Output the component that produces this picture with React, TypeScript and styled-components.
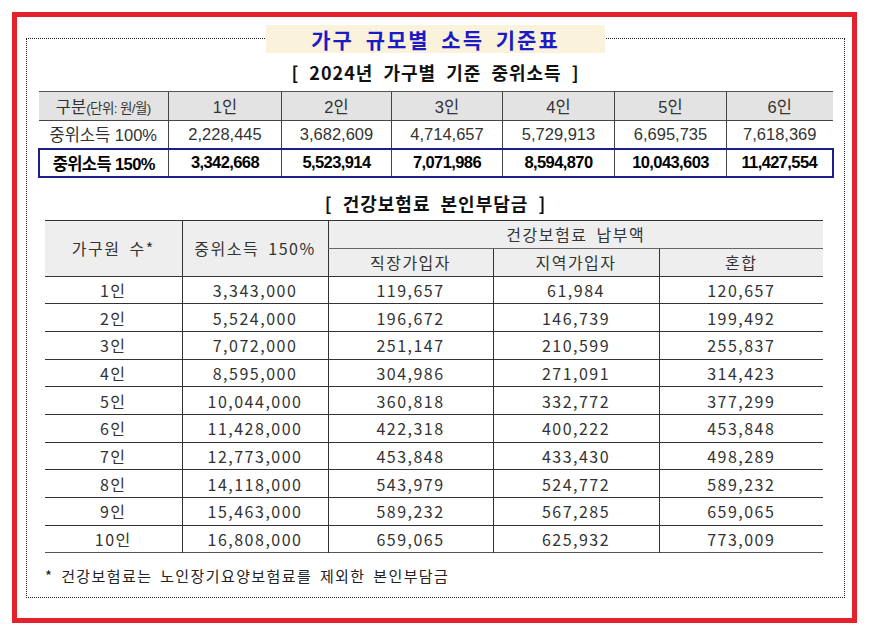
import React from 'react';
import styled, { createGlobalStyle } from 'styled-components';

const GlobalStyle = createGlobalStyle`
  body {
    margin: 0;
    background: #fff;
    font-family: "Noto Sans CJK KR", "Noto Sans", sans-serif;
  }
`;

// red outer frame
const Frame = styled.div`
  box-sizing: border-box;
  margin: 12px 0 0 12px;
  width: 845px;
  height: 611px;
  border: 5px solid #e5222b;
  padding: 21px 7px 0 9px;
`;

// dotted inner box
const Board = styled.div`
  box-sizing: border-box;
  width: 819px;
  height: 560px;
  border: 1px dotted #222;
  display: flex;
  flex-direction: column;
  align-items: center;
`;

const Title = styled.div`
  margin-top: -14px;
  width: 339px;
  height: 28px;
  background: #fbf2db;
  color: #1c1cc4;
  font-size: 21px;
  font-weight: 700;
  letter-spacing: 2px;
  word-spacing: 5px;
  line-height: 28px;
  text-align: center;
`;

const SubTitle = styled.div<{ $top: number; $h: number }>`
  margin-top: ${p => p.$top}px;
  height: ${p => p.$h}px;
  line-height: ${p => p.$h}px;
  font-size: 18px;
  font-weight: 700;
  color: #111;
  letter-spacing: 1px;
  word-spacing: 5px;
  text-align: center;
`;

const IncomeTable = styled.table`
  border-collapse: collapse;
  table-layout: fixed;
  width: 794px;
  font-family: "Liberation Sans", "Noto Sans CJK KR", sans-serif;
  font-size: 16.5px;
  color: #333;
`;

const IncomeHead = styled.th`
  height: 28px;
  padding: 0;
  background: #e3e3e3;
  font-weight: 400;
  border-top: 1px solid #555;
  border-bottom: 1px solid #444;
  & + & {
    border-left: 1px solid #444;
  }
`;

const Unit = styled.span`
  font-size: 13.5px;
  letter-spacing: -0.6px;
`;

const IncomeRow = styled.tr<{ $strong?: boolean }>`
  height: 28px;
  border: ${p => (p.$strong ? '2px solid #1d1d8c' : 'none')};
  color: ${p => (p.$strong ? '#000' : '#333')};
  font-weight: ${p => (p.$strong ? 700 : 400)};
  letter-spacing: ${p => (p.$strong ? '-0.6px' : '0')};
`;

const IncomeCell = styled.td`
  padding: 0;
  text-align: center;
  & + & {
    border-left: 1px solid #444;
  }
`;

const FeeTable = styled.table`
  align-self: flex-start;
  margin-left: 18px;
  border-collapse: collapse;
  table-layout: fixed;
  width: 778px;
  font-size: 16px;
  color: #333;
  letter-spacing: 1.5px;
  word-spacing: 4px;
  border-top: 1px solid #333;
`;

const FeeHead = styled.th<{ $edge?: boolean; $split?: boolean }>`
  height: 27px;
  padding: 0;
  background: #eeeeee;
  font-weight: 400;
  border-left: ${p => (p.$edge ? 'none' : '1px solid #333')};
  border-bottom: 1px solid ${p => (p.$split ? '#666' : '#333')};
`;

const FeeRow = styled.tr`
  height: 27.7px;
  border-bottom: 1px solid #333;
  &:last-child {
    border-bottom-color: #555;
  }
`;

const FeeCell = styled.td`
  padding: 0;
  text-align: center;
  & + & {
    border-left: 1px solid #333;
  }
`;

const Note = styled.div`
  align-self: flex-start;
  margin: 13px 0 0 18px;
  font-size: 15px;
  line-height: 20px;
  color: #222;
  letter-spacing: 1.4px;
  word-spacing: 3px;
`;

const incomeCols = [130, 113, 110, 111, 112, 112, 106];
const feeCols = [137, 146, 165, 166, 164];

const base = ['2,228,445', '3,682,609', '4,714,657', '5,729,913', '6,695,735', '7,618,369'];
const high = ['3,342,668', '5,523,914', '7,071,986', '8,594,870', '10,043,603', '11,427,554'];

const fees = [
  ['1인', '3,343,000', '119,657', '61,984', '120,657'],
  ['2인', '5,524,000', '196,672', '146,739', '199,492'],
  ['3인', '7,072,000', '251,147', '210,599', '255,837'],
  ['4인', '8,595,000', '304,986', '271,091', '314,423'],
  ['5인', '10,044,000', '360,818', '332,772', '377,299'],
  ['6인', '11,428,000', '422,318', '400,222', '453,848'],
  ['7인', '12,773,000', '453,848', '433,430', '498,289'],
  ['8인', '14,118,000', '543,979', '524,772', '589,232'],
  ['9인', '15,463,000', '589,232', '567,285', '659,065'],
  ['10인', '16,808,000', '659,065', '625,932', '773,009'],
];

const App: React.FC = () => {
  return (
    <>
      <GlobalStyle />
      <Frame>
        <Board>
          <Title>가구 규모별 소득 기준표</Title>
          <SubTitle $top={0} $h={38}>[ 2024년 가구별 기준 중위소득 ]</SubTitle>
          <IncomeTable>
            <colgroup>
              {incomeCols.map((w, i) => (
                <col key={i} style={{ width: w }} />
              ))}
            </colgroup>
            <thead>
              <tr>
                <IncomeHead>
                  구분<Unit>(단위: 원/월)</Unit>
                </IncomeHead>
                {[1, 2, 3, 4, 5, 6].map(n => (
                  <IncomeHead key={n}>{n}인</IncomeHead>
                ))}
              </tr>
            </thead>
            <tbody>
              <IncomeRow>
                <IncomeCell>중위소득 100%</IncomeCell>
                {base.map(v => (
                  <IncomeCell key={v}>{v}</IncomeCell>
                ))}
              </IncomeRow>
              <IncomeRow $strong>
                <IncomeCell>중위소득 150%</IncomeCell>
                {high.map(v => (
                  <IncomeCell key={v}>{v}</IncomeCell>
                ))}
              </IncomeRow>
            </tbody>
          </IncomeTable>
          <SubTitle $top={9} $h={33}>[ 건강보험료 본인부담금 ]</SubTitle>
          <FeeTable>
            <colgroup>
              {feeCols.map((w, i) => (
                <col key={i} style={{ width: w }} />
              ))}
            </colgroup>
            <thead>
              <tr>
                <FeeHead rowSpan={2} $edge>
                  가구원 수*
                </FeeHead>
                <FeeHead rowSpan={2}>중위소득 150%</FeeHead>
                <FeeHead colSpan={3} $split>
                  건강보험료 납부액
                </FeeHead>
              </tr>
              <tr>
                <FeeHead>직장가입자</FeeHead>
                <FeeHead>지역가입자</FeeHead>
                <FeeHead>혼합</FeeHead>
              </tr>
            </thead>
            <tbody>
              {fees.map(row => (
                <FeeRow key={row[0]}>
                  {row.map((v, i) => (
                    <FeeCell key={i}>{v}</FeeCell>
                  ))}
                </FeeRow>
              ))}
            </tbody>
          </FeeTable>
          <Note>* 건강보험료는 노인장기요양보험료를 제외한 본인부담금</Note>
        </Board>
      </Frame>
    </>
  );
};

export default App;
